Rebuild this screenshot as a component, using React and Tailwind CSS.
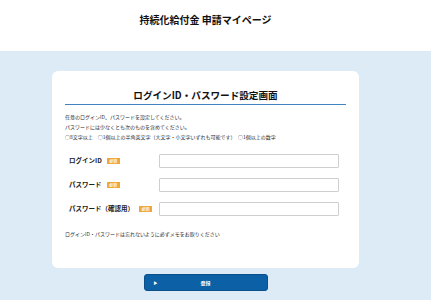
const FONT = { fontFamily: '"Noto Sans CJK JP", "Liberation Sans", sans-serif' };

function Badge() {
  return (
    <span className="ml-[5px] inline-flex h-[6px] w-[13px] items-center justify-center bg-[#f0a63a] text-[4px] leading-none font-bold text-white">
      必須
    </span>
  );
}

function Row({ label }) {
  return (
    <div className="flex items-center">
      <div className="flex w-[94px] items-center pl-[4px] text-[6.5px] font-bold text-[#222]">
        {label}
        <Badge />
      </div>
      <div className="h-[14px] w-[180px] rounded-[1px] border border-[#cfcfcf] bg-white" />
    </div>
  );
}

export default function App() {
  return (
    <div className="h-[300px] w-[431px] overflow-hidden bg-[#dcebf5]" style={FONT}>
      {/* Header */}
      <div className="flex h-[51px] w-full bg-white pr-[20px]">
        <div className="flex flex-1 items-center justify-center pb-[13px] text-[10px] font-bold text-[#111]">
          持続化給付金 申請マイページ
        </div>
      </div>

      <div className="flex flex-col items-center pt-[20px] pr-[20px]">
        {/* Card */}
        <div className="w-[307px] rounded-[6px] bg-white px-[13px] pb-[29px]">
          <div className="border-b-[1.5px] border-[#3f83c3] pt-[17px] pb-[2px] text-center text-[9.6px] leading-[14px] font-bold text-[#111]">
            ログインID・パスワード設定画面
          </div>

          <div className="mt-[7px] text-[5px] leading-[10px] text-[#2a2a2a]">
            <p>任意のログインID、パスワードを設定してください。</p>
            <p>パスワードには少なくとも次のものを含めてください。</p>
            <p>○8文字以上　○1個以上の半角英文字（大文字・小文字いずれも可能です）　○1個以上の数字</p>
          </div>

          <div className="mt-[12px] flex flex-col gap-[10px]">
            <Row label="ログインID" />
            <Row label="パスワード" />
            <Row label="パスワード（確認用）" />
          </div>

          <p className="mt-[13px] text-[5px] leading-[10px] text-[#2a2a2a]">
            ログインID・パスワードは忘れないように必ずメモをお取りください
          </p>
        </div>

        {/* Submit */}
        <button className="relative mt-[6px] flex h-[17px] w-[124px] items-center justify-center rounded-[3px] border border-[#0a4f8a] bg-[#0b60a6] text-[5px] font-bold text-white">
          <span className="absolute left-[9px] text-[4px]">▶</span>
          登録
        </button>
      </div>
    </div>
  );
}
